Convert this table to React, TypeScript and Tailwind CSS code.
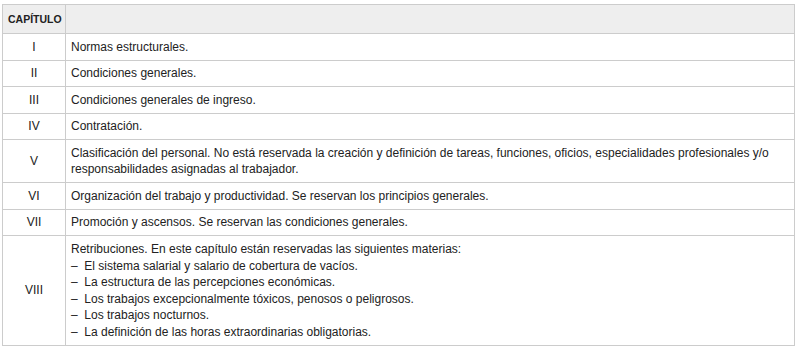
import React from 'react';

interface Chapter {
  num: string;
  lines: string[];
}

const chapters: Chapter[] = [
  { num: 'I', lines: ['Normas estructurales.'] },
  { num: 'II', lines: ['Condiciones generales.'] },
  { num: 'III', lines: ['Condiciones generales de ingreso.'] },
  { num: 'IV', lines: ['Contratación.'] },
  {
    num: 'V',
    lines: [
      'Clasificación del personal. No está reservada la creación y definición de tareas, funciones, oficios, especialidades profesionales y/o responsabilidades asignadas al trabajador.',
    ],
  },
  { num: 'VI', lines: ['Organización del trabajo y productividad. Se reservan los principios generales.'] },
  { num: 'VII', lines: ['Promoción y ascensos. Se reservan las condiciones generales.'] },
  {
    num: 'VIII',
    lines: [
      'Retribuciones. En este capítulo están reservadas las siguientes materias:',
      '–  El sistema salarial y salario de cobertura de vacíos.',
      '–  La estructura de las percepciones económicas.',
      '–  Los trabajos excepcionalmente tóxicos, penosos o peligrosos.',
      '–  Los trabajos nocturnos.',
      '–  La definición de las horas extraordinarias obligatorias.',
    ],
  },
];

const App: React.FC = () => {
  return (
    <div className="bg-white w-[797px] h-[347px] pt-[4px] px-[2px] font-['Liberation_Sans',Arial,sans-serif] text-[12px] leading-[16.5px] text-[#222]">
      <table className="w-full table-fixed border-collapse">
        <colgroup>
          <col className="w-[63px]" />
          <col />
        </colgroup>
        <thead>
          <tr className="bg-[#eeeeee]">
            <th className="border border-[#cccccc] px-[5px] h-[29px] text-left text-[10.5px] font-bold text-[#222]">
              CAPÍTULO
            </th>
            <th className="border border-[#cccccc]"></th>
          </tr>
        </thead>
        <tbody>
          {chapters.map((ch) => {
            const pad = ch.lines.length > 1 ? 'py-[5px]' : 'py-[4.5px]';
            return (
              <tr key={ch.num}>
                <td className={`border border-[#cccccc] text-center align-middle px-[5px] ${pad}`}>{ch.num}</td>
                <td className={`border border-[#cccccc] px-[5px] ${pad}`}>
                  {ch.lines.map((l, i) => (
                    <div key={i} className="whitespace-pre-wrap">
                      {l}
                    </div>
                  ))}
                </td>
              </tr>
            );
          })}
        </tbody>
      </table>
    </div>
  );
};

export default App;
